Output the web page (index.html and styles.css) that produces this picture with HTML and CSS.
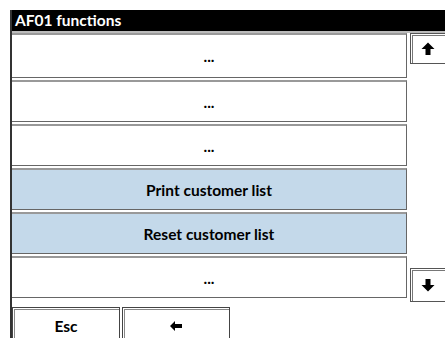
FILE: index.html
```html
<!DOCTYPE html>
<html lang="en">
<head>
    <meta charset="UTF-8">
    <title>AF01 functions</title>
    <link rel="stylesheet" href="styles.css">
</head>
<body>
    <div class="screen">
        <div class="title">AF01 functions</div>
        <div class="main">
            <div class="list">
                <div class="row first">...</div>
                <div class="row">...</div>
                <div class="row">...</div>
                <div class="row sel">Print customer list</div>
                <div class="row sel">Reset customer list</div>
                <div class="row">...</div>
            </div>
            <div class="scroll">
                <div class="sbtn">
                    <svg width="14" height="14" viewBox="0 0 14 14"><polygon points="7,0.5 13.5,7 9.5,7 9.5,13 4.5,13 4.5,7 0.5,7" fill="#000"/></svg>
                </div>
                <div class="sbtn down">
                    <svg width="14" height="14" viewBox="0 0 14 14"><polygon points="7,13.5 13.5,7 9.5,7 9.5,1 4.5,1 4.5,7 0.5,7" fill="#000"/></svg>
                </div>
            </div>
        </div>
        <div class="footer">
            <div class="fbtn">Esc</div>
            <div class="fbtn">
                <svg width="12" height="10" viewBox="0 0 12 10"><polygon points="0,5 5,0 5,3 12,3 12,7 5,7 5,10" fill="#000"/></svg>
            </div>
        </div>
    </div>
</body>
</html>
```

FILE: styles.css
```css
html, body {
    margin: 0;
    padding: 0;
    background: #fff;
    overflow: hidden;
}

body {
    font-family: Lato, "Open Sans", sans-serif;
    font-weight: bold;
    color: #000;
}

.screen {
    margin: 10px 0 0 10px;
    border-left: 2px solid #333;
    height: 340px;
}

.title {
    background: #000;
    color: #fff;
    height: 21px;
    line-height: 21px;
    font-size: 15.5px;
    padding-left: 3px;
    border-bottom: 2px solid #bbb;
}

.main {
    display: flex;
}

.list {
    width: 395px;
    display: flex;
    flex-direction: column;
    gap: 1px;
}

.row {
    height: 42px;
    box-sizing: border-box;
    border: 1px solid #666;
    border-top: 2px solid #999;
    border-left: none;
    display: flex;
    align-items: center;
    justify-content: center;
    font-size: 15.5px;
    margin-bottom: 1px;
    background: #fff;
}

.row.first {
    height: 45px;
}

.row.sel {
    background: #c4d9ea;
}

.scroll {
    flex: 1;
    display: flex;
    flex-direction: column;
    justify-content: space-between;
    padding-left: 3px;
}

.sbtn {
    height: 31px;
    box-sizing: border-box;
    border: 1px solid #555;
    border-right: none;
    box-shadow: inset 1px 1px 0 #fff, inset 2px 2px 0 #777;
    display: flex;
    align-items: center;
    justify-content: center;
}

.sbtn.down {
    height: 34px;
    margin-bottom: -3px;
}

.footer {
    display: flex;
    gap: 2px;
    margin-top: 8px;
}

.fbtn {
    width: 108px;
    height: 36px;
    box-sizing: border-box;
    border: 1px solid #444;
    box-shadow: inset 1px 1px 0 #fff, inset 2px 2px 0 #888;
    display: flex;
    align-items: center;
    justify-content: center;
    font-size: 15.5px;
    padding-top: 2px;
}
```
